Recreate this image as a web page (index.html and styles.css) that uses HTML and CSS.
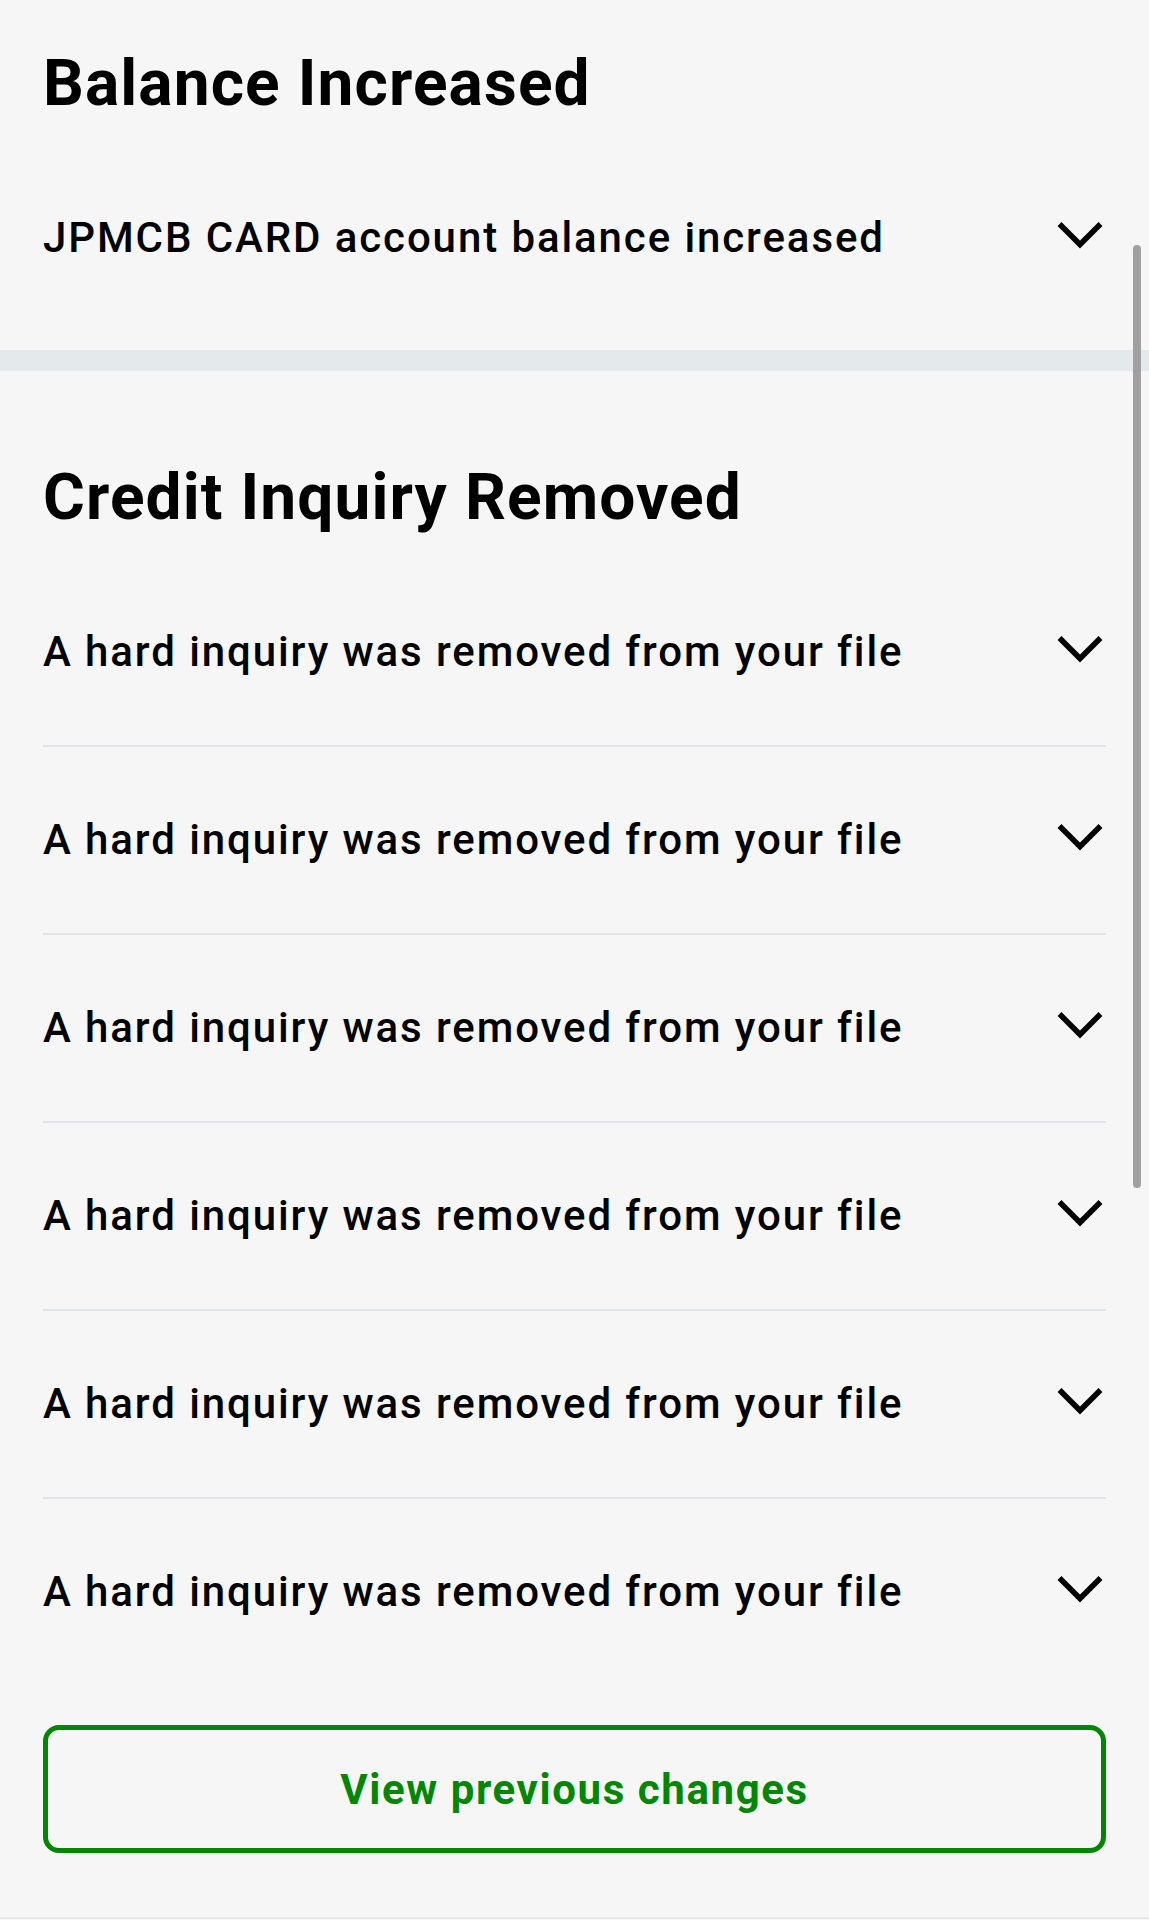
FILE: index.html
```html
<!DOCTYPE html>
<html>
<head>
  <meta charset="UTF-8">
  <title>Credit Report Changes</title>
  <meta name="viewport" content="width=device-width, initial-scale=1">
  <link rel="stylesheet" href="styles.css">
</head>
<body>

<div class="page">
  <!-- Balance changes -->
  <section class="group first">
    <h2>Balance Increased</h2>
    <div class="row">
      <span class="row-text">JPMCB CARD account balance increased</span>
      <svg class="chevron" viewBox="0 0 46 28"><polyline points="2.5,3 23,23.5 43.5,3"/></svg>
    </div>
  </section>

  <div class="band"></div>

  <!-- Inquiry changes -->
  <section class="group">
    <h2>Credit Inquiry Removed</h2>
    <div class="row">
      <span class="row-text">A hard inquiry was removed from your file</span>
      <svg class="chevron" viewBox="0 0 46 28"><polyline points="2.5,3 23,23.5 43.5,3"/></svg>
    </div>
    <div class="row">
      <span class="row-text">A hard inquiry was removed from your file</span>
      <svg class="chevron" viewBox="0 0 46 28"><polyline points="2.5,3 23,23.5 43.5,3"/></svg>
    </div>
    <div class="row">
      <span class="row-text">A hard inquiry was removed from your file</span>
      <svg class="chevron" viewBox="0 0 46 28"><polyline points="2.5,3 23,23.5 43.5,3"/></svg>
    </div>
    <div class="row">
      <span class="row-text">A hard inquiry was removed from your file</span>
      <svg class="chevron" viewBox="0 0 46 28"><polyline points="2.5,3 23,23.5 43.5,3"/></svg>
    </div>
    <div class="row">
      <span class="row-text">A hard inquiry was removed from your file</span>
      <svg class="chevron" viewBox="0 0 46 28"><polyline points="2.5,3 23,23.5 43.5,3"/></svg>
    </div>
    <div class="row">
      <span class="row-text">A hard inquiry was removed from your file</span>
      <svg class="chevron" viewBox="0 0 46 28"><polyline points="2.5,3 23,23.5 43.5,3"/></svg>
    </div>

    <button class="btn-outline">View previous changes</button>
  </section>

  <div class="scrollbar"></div>
</div>

</body>
</html>
```

FILE: styles.css
```css
/* Page background and base font */
body {
  margin: 0;
  padding: 0;
  background: #f6f6f6;
  font-family: Roboto, "Liberation Sans", Arial, sans-serif;
  color: #000;
}
.page {
  position: relative;
  min-height: 1918px;
  border-bottom: 2px solid #e8e8e8;
  box-sizing: border-box;
}
.group {
  padding: 89px 43px 64px;
}
.group.first {
  padding-top: 46px;
  padding-bottom: 19px;
}
h2 {
  font-size: 64px;
  line-height: 76px;
  font-weight: 700;
  letter-spacing: 1.1px;
  margin: 0 0 23px;
}
.band {
  height: 21px;
  background: #e4e9ec;
}
.row {
  display: flex;
  align-items: center;
  justify-content: space-between;
  padding: 68px 0;
  border-bottom: 2px solid #dde5ea;
}
.row:last-of-type {
  border-bottom: none;
}
.row-text {
  font-size: 42px;
  line-height: 50px;
  font-weight: 500;
  letter-spacing: 1.9px;
}
.chevron {
  width: 46px;
  height: 28px;
  margin: 0 3px 7px 0;
  fill: none;
  stroke: #000;
  stroke-width: 5.5;
}
.btn-outline {
  display: block;
  width: 100%;
  height: 128px;
  margin-top: 40px;
  background: transparent;
  border: 5px solid #008600;
  border-radius: 16px;
  color: #008600;
  font-family: inherit;
  font-size: 42px;
  font-weight: 700;
  letter-spacing: 1.6px;
  cursor: pointer;
}
/* overlay scroll indicator */
.scrollbar {
  position: absolute;
  top: 245px;
  right: 8px;
  width: 8px;
  height: 943px;
  border-radius: 4px;
  background: #a0a0a0;
}
```
